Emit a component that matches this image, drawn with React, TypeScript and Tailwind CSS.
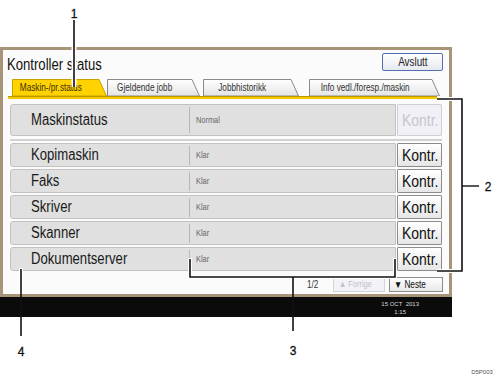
import React from 'react';

const uiFont = { fontFamily: '"Liberation Sans", Arial, sans-serif' };

// the panel font is narrow; squeeze Liberation Sans to Arial Narrow widths
function N({ children, center }: { children: React.ReactNode; center?: boolean }) {
  return (
    <span className={`inline-block whitespace-nowrap scale-x-[0.82] ${center ? 'origin-center' : 'origin-left'}`}>{children}</span>
  );
}

function Tab({ label, width, active, className }: { label: string; width: number; active?: boolean; className: string }) {
  return (
    <div className={`relative h-[17px] flex items-center justify-center pr-[18px] ${className}`}>
      <svg width={width} height={17} className="absolute left-0 top-0">
        <defs>
          <linearGradient id="tabg" x1="0" y1="0" x2="0" y2="1">
            <stop offset="0" stopColor="#ffffff" />
            <stop offset="1" stopColor="#e4e4e4" />
          </linearGradient>
        </defs>
        <polygon
          points={`0.5,17 0.5,0.5 ${width - 8},0.5 ${width - 0.5},17`}
          fill={active ? '#ffd200' : 'url(#tabg)'}
          stroke={active ? '#c7a200' : '#8a8a8a'}
          strokeWidth={1}
        />
      </svg>
      <span className={`relative text-[10px] leading-none ${active ? 'text-[#3a3000]' : 'text-[#333]'}`}>
        <N center>{label}</N>
      </span>
    </div>
  );
}

function Row({ label, status, tall, disabled }: { label: string; status: string; tall?: boolean; disabled?: boolean }) {
  return (
    <div className={`flex ${tall ? 'h-[32px]' : 'h-[24px]'}`}>
      <div className="flex-1 flex items-center bg-[#e0e0e0] border border-[#c2c2c2] rounded-l-[3px]">
        <div className="w-[178px] pl-[20px] text-[16px] text-[#1a1a1a] leading-none">
          <N>{label}</N>
        </div>
        <div className={`border-l border-[#b8b8b8] ${tall ? 'h-[26px]' : 'h-[19px]'}`} />
        <div className="pl-[6px] text-[9px] text-[#666] leading-none">
          <N>{status}</N>
        </div>
      </div>
      <button
        className={`ml-[1px] w-[45px] border rounded-[1px] text-[17px] leading-none ${
          disabled
            ? 'border-[#cfcfd8] bg-[#f1f0f6] text-[#c6c6d0]'
            : 'border-[#8c8c8c] bg-gradient-to-b from-white to-[#e6e6e6] text-[#111]'
        }`}
      >
        <N center>Kontr.</N>
      </button>
    </div>
  );
}

export default function App() {
  return (
    <div className="relative w-[500px] h-[378px] bg-white overflow-hidden" style={uiFont}>
      <div className="pt-[47px] w-[452px]">
        <div className="h-[250px] border-[3px] border-[#a89476] bg-[#fbfbfb] flex flex-col">
          {/* title */}
          <div className="h-[29px] flex items-start justify-between pl-[4px] pr-[6px]">
            <span className="mt-[7px] text-[16px] leading-none text-[#111]">
              <N>Kontroller status</N>
            </span>
            <button className="mt-[3px] w-[61px] h-[18px] border border-[#4f6fae] rounded-[2px] bg-gradient-to-b from-white to-[#e6e9f0] text-[12px] leading-none text-[#222]">
              <N center>Avslutt</N>
            </button>
          </div>

          {/* tabs */}
          <div className="flex h-[17px] ml-[9px]">
            <Tab label="Maskin-/pr.status" width={95} active className="w-[95px]" />
            <Tab label="Gjeldende jobb" width={93} className="w-[93px]" />
            <Tab label="Jobbhistorikk" width={96} className="w-[96px] ml-[3px]" />
            <Tab label="Info vedl./foresp./maskin" width={131} className="w-[131px] ml-[10px]" />
          </div>
          <div className="ml-[5px] w-[429px] h-[3px] border-t border-[#b89a00] bg-[#f7c800]" />

          {/* rows */}
          <div className="mt-[5px] px-[7px] flex flex-col">
            <Row label="Maskinstatus" status="Normal" tall disabled />
            <div className="mt-[3px] h-[2px] border-t border-b border-[#d2d2d2] bg-white" />
            <div className="mt-[2px] flex flex-col gap-[2px]">
              <Row label="Kopimaskin" status="Klar" />
              <Row label="Faks" status="Klar" />
              <Row label="Skriver" status="Klar" />
              <Row label="Skanner" status="Klar" />
              <Row label="Dokumentserver" status="Klar" />
            </div>
          </div>

          {/* paging */}
          <div className="mt-[6px] flex items-center justify-end pr-[6px] h-[15px]">
            <span className="text-[10px] text-[#333] mr-[12px] leading-none">
              <N>1/2</N>
            </span>
            <button className="w-[52px] h-[15px] border border-[#d4d4dc] bg-[#f3f3f7] text-[9px] text-[#c0c0c8] leading-none text-left pl-[5px]">
              <N>▲ Forrige</N>
            </button>
            <button className="ml-[4px] w-[54px] h-[15px] border border-[#8c8c8c] bg-gradient-to-b from-white to-[#e8e8e8] text-[10px] text-[#111] leading-none text-left pl-[4px]">
              <N>▼ Neste</N>
            </button>
          </div>
        </div>

        {/* black status bar */}
        <div className="h-[20px] bg-[#0b0b0b] flex justify-end pr-[33px]">
          <div className="flex flex-col items-center pt-[3px] text-[6px] leading-[8px] text-[#d8d8d8]">
            <span>15 OCT&nbsp;&nbsp;2013</span>
            <span>1:15</span>
          </div>
        </div>
      </div>

      {/* callouts */}
      <svg className="absolute inset-0 pointer-events-none" width={500} height={378} style={{ fontFamily: '"Liberation Sans", Arial, sans-serif' }}>
        <g fill="none" strokeLinecap="butt">
          <line x1={74} y1={20} x2={74} y2={87} stroke="white" strokeWidth={5} />
          <polyline points="437,99 462,99 462,271 437,271" stroke="white" strokeWidth={4} />
          <polyline points="190,258 190,277 395,277 395,258" stroke="white" strokeWidth={4} />
          <line x1={21} y1={268} x2={21} y2={294} stroke="white" strokeWidth={4} />

          <line x1={74} y1={20} x2={74} y2={87} stroke="#111" strokeWidth={1.6} />
          <polyline points="437,99 462,99 462,271 437,271" stroke="#111" strokeWidth={1.6} />
          <line x1={462} y1={186} x2={479} y2={186} stroke="#111" strokeWidth={1.4} />
          <polyline points="190,259 190,277 395,277 395,259" stroke="#111" strokeWidth={1.6} />
          <line x1={293} y1={277} x2={293} y2={331} stroke="#111" strokeWidth={1.6} />
          <line x1={21} y1={269} x2={21} y2={336} stroke="#111" strokeWidth={1.6} />
        </g>
        <g fill="#111" fontSize={12} textAnchor="middle" stroke="#111" strokeWidth={0.3}>
          <text x={74} y={18}>1</text>
          <text x={488} y={191}>2</text>
          <text x={293} y={355}>3</text>
          <text x={21} y={356}>4</text>
        </g>
        <text x={482} y={374} fontSize={6} fill="#555" textAnchor="middle">D5P003</text>
      </svg>
    </div>
  );
}
